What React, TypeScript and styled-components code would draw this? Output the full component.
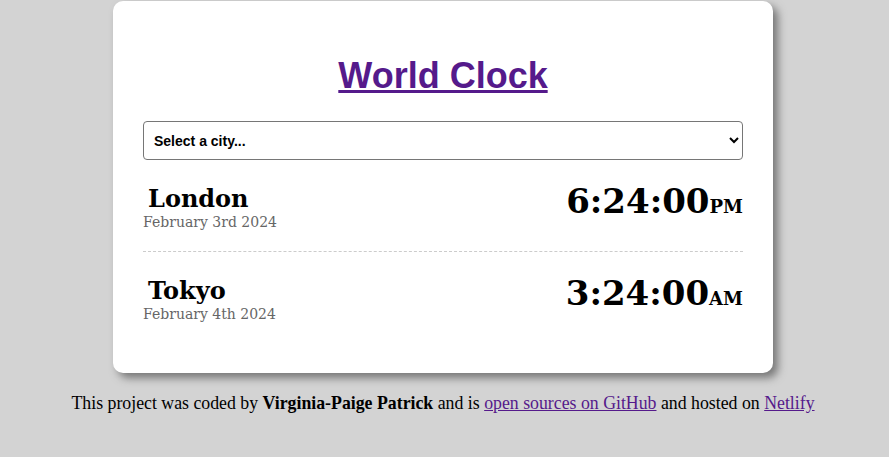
import React from "react";
import styled, { createGlobalStyle } from "styled-components";

const GlobalStyle = createGlobalStyle`
  html, body {
    margin: 0;
    padding: 0;
    background: #d3d3d3;
    font-family: "Liberation Serif", "Times New Roman", serif;
    font-size: 16px;
    color: #000;
  }
`;

const Page = styled.div`
  padding: 1px 3px 0 0;
`;

const Card = styled.main`
  box-sizing: border-box;
  width: 660px;
  margin: 0 auto;
  padding: 30px;
  background: #fff;
  border-radius: 10px;
  box-shadow: 5px 5px 8px #777;
`;

const Title = styled.h1`
  margin: 24px 0;
  text-align: center;
  font-family: "Liberation Sans", Arial, sans-serif;
  font-size: 36px;
  font-weight: 700;
  line-height: normal;

  a {
    color: #551a8b;
    text-decoration: underline;
  }
`;

const CitySelect = styled.select`
  display: block;
  box-sizing: border-box;
  width: 100%;
  height: 39px;
  padding: 0 6px 0 6px;
  border: 1px solid #767676;
  border-radius: 4px;
  background: #fff;
  color: #000;
  font-family: "Liberation Sans", Arial, sans-serif;
  font-size: 14px;
  font-weight: 700;
`;

const Row = styled.div`
  display: flex;
  justify-content: space-between;
  align-items: flex-start;
  padding: 20px 0;
  border-bottom: 1px dashed #ccc;

  &:last-child {
    border-bottom: none;
  }
`;

const CityInfo = styled.div`
  display: flex;
  flex-direction: column;
`;

const CityName = styled.h2`
  margin: 5px 0 0;
  padding-left: 5px;
  font-family: "DejaVu Serif", Georgia, serif;
  font-size: 24px;
  font-weight: 700;
  line-height: 28px;
`;

const CityDate = styled.div`
  font-family: "DejaVu Serif", Georgia, serif;
  font-size: 14px;
  line-height: 18px;
  color: #666;
`;

const Time = styled.div`
  margin-top: 1px;
  font-family: "DejaVu Serif", Georgia, serif;
  font-size: 34px;
  font-weight: 700;
  line-height: 40px;
  white-space: nowrap;
`;

const Meridiem = styled.small`
  font-size: 18px;
  font-weight: 700;
`;

const Footer = styled.footer`
  margin-top: 20px;
  text-align: center;
  font-size: 17.8px;
  line-height: normal;

  a {
    color: #551a8b;
  }
`;

const cities = [
  { name: "London", date: "February 3rd 2024", time: "6:24:00", ampm: "PM" },
  { name: "Tokyo", date: "February 4th 2024", time: "3:24:00", ampm: "AM" },
];

export default function App() {
  return (
    <Page>
      <GlobalStyle />
      <Card>
        <Title>
          <a href="#">World Clock</a>
        </Title>
        <CitySelect defaultValue="">
          <option value="">Select a city...</option>
          <option value="Europe/London">London</option>
          <option value="Asia/Tokyo">Tokyo</option>
        </CitySelect>
        <div>
          {cities.map((c) => (
            <Row key={c.name}>
              <CityInfo>
                <CityName>{c.name}</CityName>
                <CityDate>{c.date}</CityDate>
              </CityInfo>
              <Time>
                {c.time}
                <Meridiem>{c.ampm}</Meridiem>
              </Time>
            </Row>
          ))}
        </div>
      </Card>
      <Footer>
        This project was coded by <strong>Virginia-Paige Patrick</strong> and is{" "}
        <a href="#">open sources on GitHub</a> and hosted on <a href="#">Netlify</a>
      </Footer>
    </Page>
  );
}
